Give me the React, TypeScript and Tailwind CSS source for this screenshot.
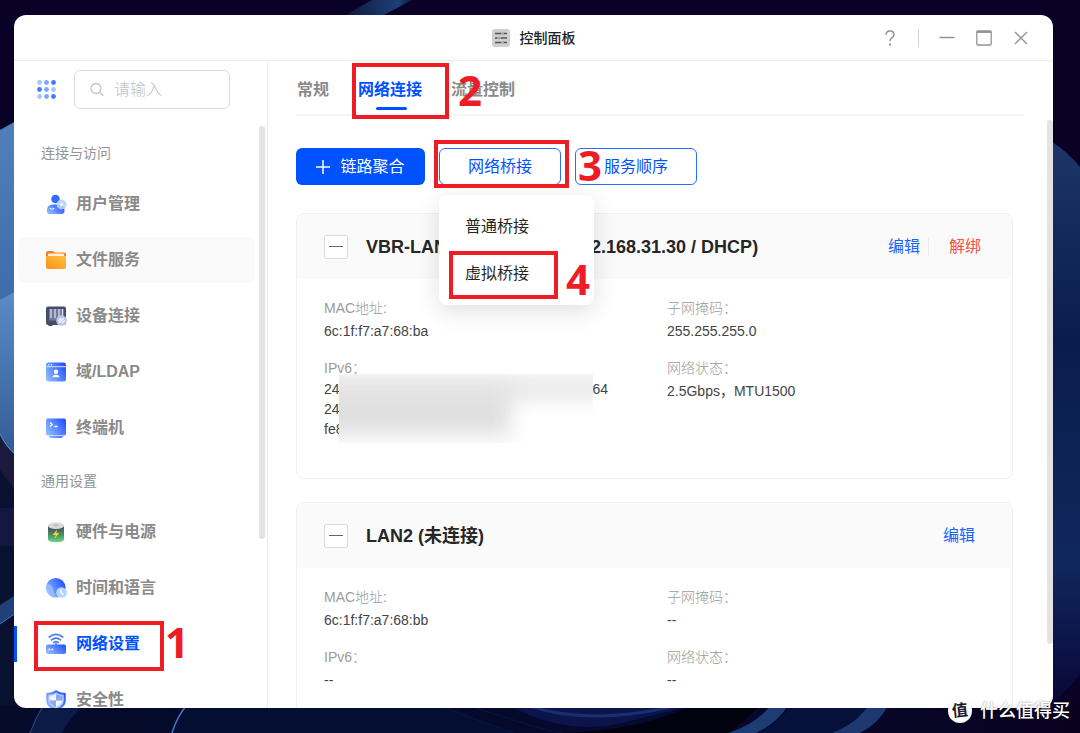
import { Fragment } from 'react';
import type { ReactNode } from 'react';

type MarkerProps = { step: number; box: string; digit: string };

// Red frame with its step number, placed over the control it belongs to
function Marker({ step, box, digit }: MarkerProps) {
  return (
    <>
      <span className={`absolute z-20 border-4 border-[#ee1c24] pointer-events-none ${box}`} />
      <span
        className={`absolute z-20 font-['Open_Sans',sans-serif] text-[42px] leading-none font-bold text-[#ee1c24] pointer-events-none ${digit}`}
      >
        {step}
      </span>
    </>
  );
}

function Wallpaper() {
  return (
    <svg
      className="absolute inset-0 w-full h-full"
      viewBox="0 0 1080 733"
      preserveAspectRatio="none"
      aria-hidden="true"
    >
      <defs>
        <linearGradient id="leftPetal" x1="0" y1="0" x2="0" y2="1">
          <stop offset="0" stopColor="#5080ba" />
          <stop offset="0.5" stopColor="#3f6cab" />
          <stop offset="1" stopColor="#3d69a6" />
        </linearGradient>
        <linearGradient id="leftPetal2" x1="0" y1="0" x2="0" y2="1">
          <stop offset="0" stopColor="#5a8cc6" />
          <stop offset="1" stopColor="#345b98" />
        </linearGradient>
        <linearGradient id="rightPetal" x1="0" y1="0" x2="0" y2="1">
          <stop offset="0" stopColor="#1d3569" />
          <stop offset="0.35" stopColor="#0a1c4b" />
          <stop offset="0.75" stopColor="#10275e" />
          <stop offset="1" stopColor="#0a0636" />
        </linearGradient>
        <linearGradient id="floor" x1="0" y1="0" x2="1" y2="0">
          <stop offset="0" stopColor="#060b2b" />
          <stop offset="0.3" stopColor="#030928" />
          <stop offset="0.6" stopColor="#07092f" />
          <stop offset="1" stopColor="#09021f" />
        </linearGradient>
        <linearGradient id="topArc" x1="0" y1="0" x2="1" y2="0">
          <stop offset="0" stopColor="#0e1740" />
          <stop offset="0.8" stopColor="#1d4076" />
          <stop offset="1" stopColor="#0e1a44" />
        </linearGradient>
      </defs>
      <rect width="1080" height="733" fill="#0a0226" />
      <path d="M372 0h40l-30 16h-38z" fill="url(#topArc)" />
      <path d="M0 130L16 121V470H0z" fill="url(#leftPetal)" />
      <path d="M0 300L16 291V453Q6 447 0 434z" fill="url(#leftPetal2)" />
      <path d="M0 434Q6 447 16 455V510H0z" fill="#1b1a3c" />
      <path d="M0 434Q6 447 16 455" fill="none" stroke="#5c8fc8" />
      <path d="M0 470l16 22v241H0z" fill="#08112f" />
      <path d="M0 508h16v38H0z" fill="#141741" />
      <path d="M0 605l16-10v18l-16 11z" fill="#213f78" />
      <path d="M0 624l16-11" stroke="#3f75bd" />
      <path d="M1052 142q16 10 28 25v508l-28 30z" fill="url(#rightPetal)" />
      <path d="M0 706H1080V733H0z" fill="url(#floor)" />
      <path d="M30 733q6-16 13-27h40q-12 10-21 27z" fill="#0c1a47" />
      <path d="M30 733q6-16 13-27" fill="none" stroke="#24508f" />
      <path d="M174 733q5-16 14-27h260l64 27z" fill="#040d32" />
      <path d="M172 733q5-16 14-27" fill="none" stroke="#3a7cc9" strokeWidth="1.5" />
      <path d="M438 706l76 27M470 706l62 20 30 7" fill="none" stroke="#0b1644" />
      <path d="M510 706q60 32 120 15l60-15z" fill="#0b154b" />
      <path d="M530 706q60 20 145 0" fill="none" stroke="#182f70" strokeWidth="3" />
      <path d="M560 733q80-2 130-27h70l-30 27z" fill="#02020f" />
      <path d="M728 733q28-9 42-27h18q-12 18-32 27z" fill="#1c3c74" />
      <path d="M758 733q20-9 32-27h80l-20 27z" fill="#06113b" />
      <path d="M832 733q24-9 36-27h20q-10 18-28 27z" fill="#1c3970" />
    </svg>
  );
}

const icons: Record<string, ReactNode> = {
  user: (
    <>
      <circle cx="9.500" cy="5" r="4.300" fill="url(#blue)" />
      <path d="M1 15.500Q1 11 7 10.500q4-.300 9 1 2.500 1 2.500 5 0 3.500-3 3.500H3.500Q1 20 1 17.500z" fill="url(#blueH)" />
      <path d="M4 14.500q1.500 1.500 4 .200" stroke="#fff" strokeWidth="1" fill="none" strokeLinecap="round" />
      <circle cx="15.500" cy="10.500" r="5" fill="#b7d1ff" fillOpacity=".9" />
      <circle cx="15.500" cy="10.500" r="1.800" fill="#eef4ff" />
    </>
  ),
  folder: (
    <>
      <path d="M0 3Q0 1 2 1h5l2 1.500h9q2 0 2 2V10H0z" fill="#f58220" />
      <rect x="2" y="3.500" width="16" height="5" rx="1" fill="#fff0dc" />
      <path d="M0 6h20v11q0 2-2 2H2q-2 0-2-2z" fill="url(#orange)" />
    </>
  ),
  device: (
    <>
      <rect x="0" y="0.500" width="20" height="18.500" rx="2" fill="#454d6c" />
      <rect x="2.500" y="18" width="4" height="2" fill="#454d6c" />
      <rect x="3" y="3" width="14.500" height="11.500" fill="#737b9b" />
      <path d="M5 3v9M9 3v9M13 3v9M16.500 3v9" stroke="#d9def0" strokeWidth="1.300" />
      <circle cx="15.500" cy="14.500" r="5.300" fill="#bcc5e4" />
      <path d="M13.500 16.500l4-4M12.800 14.800l2-2.300M16.200 17l2-2.300" stroke="#f1f4fc" strokeWidth="1.300" strokeLinecap="round" />
    </>
  ),
  domain: (
    <>
      <rect x="0" y="0.500" width="20" height="19" rx="2.500" fill="url(#blueH)" />
      <path d="M0 4.700h20" stroke="#d6e4ff" strokeWidth="1" />
      <circle cx="2.800" cy="2.800" r=".7" fill="#fff" />
      <circle cx="5.400" cy="2.800" r=".7" fill="#fff" />
      <circle cx="10" cy="9.800" r="2.200" fill="#fff" />
      <path d="M6.500 15.200q0-2.500 3.500-2.500t3.500 2.500z" fill="#fff" />
    </>
  ),
  terminal: (
    <>
      <rect x="0" y="0.500" width="20" height="17" rx="2" fill="url(#blueH)" />
      <path d="M2.500 18.300h15l-2 1.700h-11z" fill="url(#blueH)" />
      <path d="M4 4.500l2.300 2L4 8.500M8.500 8.500h3.200" fill="none" stroke="#fff" strokeWidth="1.300" />
    </>
  ),
  battery: (
    <>
      <path d="M2 4v13q0 3.200 8 3.200t8-3.200V4z" fill="url(#green)" />
      <ellipse cx="10" cy="3.700" rx="8" ry="3.400" fill="#dadcd9" />
      <ellipse cx="10" cy="3.200" rx="3" ry="1" fill="#b9bbb8" />
      <path d="M11 7.500l-4.200 5.500h2.800L8.800 16.500l4.400-5.500h-2.800z" fill="#ffd21f" />
    </>
  ),
  clock: (
    <>
      <circle cx="9.800" cy="9.800" r="9.800" fill="url(#blueH)" />
      <path d="M1 6q5 0 6 5t4 8Q1 19 0 10z" fill="#a9c8ff" fillOpacity=".6" />
      <circle cx="15.500" cy="14.500" r="5.300" fill="#b5d3ff" />
      <path d="M15 11.500v3.200l2 1.800" fill="none" stroke="#fff" strokeWidth="1.300" strokeLinecap="round" />
    </>
  ),
  router: (
    <>
      <path d="M3.300 3q6.700-5.200 13.400 0M5.500 5.900q4.500-3.500 9 0M7.700 8.600q2.300-1.800 4.600 0" fill="none" stroke="#4f7cf5" strokeWidth="1.700" strokeLinecap="round" />
      <path d="M10 9v3" stroke="#5b86f5" strokeWidth="1.800" />
      <rect x="0" y="10.500" width="20" height="9.500" rx="2" fill="url(#blueH)" />
      <circle cx="3.400" cy="15.500" r=".9" fill="#fff" />
      <circle cx="6.400" cy="15.500" r=".9" fill="#fff" />
    </>
  ),
  shield: (
    <>
      <path d="M10 0q4 3 9.700 3v8q0 6-9.700 9.700Q.3 17 .3 11V3Q6 3 10 0z" fill="url(#blueH)" />
      <path d="M10 2.400Q13 4.500 17.700 4.700V11q0 4.500-7.700 7.600Q2.300 15.500 2.300 11V4.700Q7 4.500 10 2.400z" fill="#b4ccff" />
      <path d="M10 4Q7.500 5.600 3.700 6v4.500H10zM10 10.500v6.500q6.200-2.700 6.300-6.500z" fill="#f0f5ff" />
      <path d="M10 4q2.500 1.600 6.300 2v4.500H10zM10 10.500v6.500q-6.200-2.700-6.300-6.500z" fill="#8aa9f7" />
    </>
  ),
};

function NavIcon({ name }: { name: string }) {
  return (
    <svg className="w-5 h-5 shrink-0 overflow-visible" viewBox="0 0 20 20" aria-hidden="true">
      {icons[name]}
    </svg>
  );
}

function Gradients() {
  return (
    <svg className="absolute w-0 h-0" aria-hidden="true">
      <defs>
        <linearGradient id="blue" x1="1" y1="0" x2="0" y2="1">
          <stop offset="0" stopColor="#3b6cf6" />
          <stop offset="1" stopColor="#2f6bff" />
        </linearGradient>
        <linearGradient id="blueH" x1="0" y1="0.800" x2="1" y2="0.200">
          <stop offset="0" stopColor="#8fbdff" />
          <stop offset="1" stopColor="#2350ff" />
        </linearGradient>
        <linearGradient id="orange" x1="0" y1="1" x2="1" y2="0">
          <stop offset="0" stopColor="#fb9220" />
          <stop offset="1" stopColor="#ffbe3e" />
        </linearGradient>
        <linearGradient id="green" x1="0" y1="0" x2="0" y2="1">
          <stop offset="0.200" stopColor="#4b5a66" />
          <stop offset="0.600" stopColor="#4a9a63" />
          <stop offset="1" stopColor="#6fd884" />
        </linearGradient>
      </defs>
    </svg>
  );
}

const navGroups = [
  {
    title: '连接与访问',
    items: [
      { label: '用户管理', icon: 'user' },
      { label: '文件服务', icon: 'folder', hovered: true },
      { label: '设备连接', icon: 'device' },
      { label: '域/LDAP', icon: 'domain' },
      { label: '终端机', icon: 'terminal' },
    ],
  },
  {
    title: '通用设置',
    items: [
      { label: '硬件与电源', icon: 'battery' },
      { label: '时间和语言', icon: 'clock' },
      { label: '网络设置', icon: 'router', active: true },
      { label: '安全性', icon: 'shield' },
    ],
  },
] as { title: string; items: { label: string; icon: string; hovered?: boolean; active?: boolean }[] }[];

const appDots = [
  '#a9c5ff', '#7ea8ff', '#3d7bff',
  '#3d7bff', '#7ea8ff', '#a9c5ff',
  '#a9c5ff', '#7ea8ff', '#3d7bff',
];

function TitleBar() {
  return (
    <header className="relative flex shrink-0 items-center justify-center h-[46px] border-b border-[#ececec]">
      <div className="flex items-center gap-2.5">
        <svg className="w-[18px] h-[18px]" viewBox="0 0 18 18" aria-hidden="true">
          <rect width="18" height="18" rx="3" fill="#cfcfcf" />
          <path d="M3 4.500h6.500M12 4.500h3M3 9h2.500M8.500 9H15M3 13.500h6.500M12 13.500h3" stroke="#555" strokeWidth="1.500" />
          <path d="M11 3.200v2.600M7 7.700v2.600M11 12.200v2.600" stroke="#8a8a8a" strokeWidth="1.200" />
        </svg>
        <h1 className="text-sm font-medium text-[#222]">控制面板</h1>
      </div>
      <div className="absolute right-6 flex items-center text-[#949494]">
        <button type="button" aria-label="帮助">
          <svg className="w-4 h-4" viewBox="0 0 16 16" fill="none" stroke="currentColor" strokeWidth="1.500">
            <path d="M4 4.800Q4 1 8 1t4 3.500Q12 6.500 10 7.700 8 9 8 11.200" />
            <path d="M8 13.500v2" strokeWidth="2" />
          </svg>
        </button>
        <span className="w-px h-[18px] mx-5 bg-[#d2d2d2]" />
        <button type="button" aria-label="最小化" className="mr-[21px]">
          <svg className="w-4 h-4" viewBox="0 0 16 16" stroke="currentColor" strokeWidth="1.400">
            <path d="M0.500 7.500h15" />
          </svg>
        </button>
        <button type="button" aria-label="最大化" className="mr-[21px]">
          <svg className="w-4 h-4" viewBox="0 0 16 16" fill="none" stroke="currentColor" strokeWidth="1.300">
            <rect x="0.800" y="1" width="14.400" height="14" rx="1" />
            <path d="M1 2h14" strokeWidth="2.200" />
          </svg>
        </button>
        <button type="button" aria-label="关闭">
          <svg className="w-4 h-4" viewBox="0 0 16 16" stroke="currentColor" strokeWidth="1.400">
            <path d="M2 2l12 12M14 2L2 14" />
          </svg>
        </button>
      </div>
    </header>
  );
}

function Sidebar() {
  return (
    <aside className="flex flex-col shrink-0 w-[254px] border-r border-[#ececec] pt-[9px]">
      <div className="flex items-center gap-[18px] pl-[23px]">
        <svg className="w-[19px] h-[19px]" viewBox="0 0 19 19" aria-hidden="true">
          {appDots.map((fill, i) => (
            <circle key={i} cx={2.5 + (i % 3) * 7} cy={2.5 + Math.floor(i / 3) * 7} r="2.400" fill={fill} />
          ))}
        </svg>
        <label className="flex items-center gap-2.5 w-[156px] h-[39px] px-[15px] border border-[#dcdcdc] rounded-md">
          <svg className="w-3.5 h-3.5 shrink-0" viewBox="0 0 14 14" fill="none" stroke="#c4c4c4" strokeWidth="1.300">
            <circle cx="6" cy="5.500" r="5" />
            <path d="M9.500 9.200l3.800 3.600" />
          </svg>
          <input
            type="text"
            aria-label="搜索"
            placeholder="请输入"
            className="w-full min-w-0 text-base outline-none placeholder:text-[#bfbfbf] placeholder:font-light"
          />
        </label>
      </div>

      <div className="flex flex-1 min-h-0 mt-[17px]">
        <nav className="flex flex-col flex-1 gap-[3px] px-1 overflow-hidden">
          {navGroups.map((group) => (
            <Fragment key={group.title}>
              <h2 className="shrink-0 pt-[17px] pb-[15px] pl-[23px] text-sm leading-5 text-[#949494]">{group.title}</h2>
              <ul className="flex flex-col gap-2.5 shrink-0">
                {group.items.map((item) => (
                  <li key={item.label} className="relative">
                    {item.active && <span className="absolute -left-1 top-[5px] w-[3px] h-9 bg-[#0052ff]" />}
                    <a
                      href="#"
                      className={`flex items-center gap-2.5 h-[46px] pl-7 rounded-md text-base font-bold ${
                        item.active ? 'text-[#0052ff]' : 'text-[#8a8a8a]'
                      } ${item.hovered ? 'bg-[#fafafa]' : ''}`}
                    >
                      <NavIcon name={item.icon} />
                      {item.label}
                    </a>
                    {item.active && (
                      <Marker step={1} box="left-4 top-0 w-[130px] h-[50px]" digit="left-[147px] top-0" />
                    )}
                  </li>
                ))}
              </ul>
            </Fragment>
          ))}
        </nav>
        <span className="w-1.5 h-[71%] mr-0.5 rounded-full bg-[#e3e3e3]" />
      </div>
    </aside>
  );
}

function Field({ label, children }: { label: string; children: ReactNode }) {
  return (
    <div>
      <dt className="leading-[22px] text-[#9b9b9b] font-light">{label}</dt>
      <dd className="leading-6 text-[#444]">{children}</dd>
    </div>
  );
}

function Card({ title, actions, children }: { title: ReactNode; actions: ReactNode; children: ReactNode }) {
  return (
    <section className="shrink-0 border border-[#f0f0f0] rounded-lg overflow-hidden">
      <div className="flex items-center h-[65px] pl-[27px] pr-[31px] bg-[#fafafa]">
        <button
          type="button"
          aria-label="收起"
          className="flex items-center justify-center w-6 h-6 border border-[#dadada] rounded-xs bg-white"
        >
          <span className="w-3.5 h-px bg-[#666]" />
        </button>
        <h3 className="ml-[18px] text-lg font-bold text-[#262626] whitespace-nowrap">{title}</h3>
        <div className="flex items-center ml-auto text-base">{actions}</div>
      </div>
      <dl className="grid grid-cols-[343px_1fr] gap-y-3.5 min-h-[199px] pt-[18px] pl-[27px] content-start text-sm">
        {children}
      </dl>
    </section>
  );
}

// Smudge that hides the middle of the IPv6 addresses
function Redacted() {
  return (
    <div className="absolute left-[15px] -top-[5px] w-[254px] h-[69px] overflow-hidden bg-white">
      <div className="absolute -left-4 top-0 w-[310px] h-7 bg-[#ececec] blur-[8px]" />
      <div className="absolute -left-5 top-3 w-[192px] h-[50px] bg-[#e0e0e0] blur-[10px]" />
    </div>
  );
}

function Content() {
  return (
    <main className="flex flex-1 min-w-0 overflow-hidden">
      <div className="flex flex-col flex-1 min-w-0 pl-7 pr-[23px]">
        <div role="tablist" className="flex shrink-0 gap-[29px] h-[55px] px-px border-b-2 border-[#f5f5f5] text-base font-bold text-[#8a8a8a]">
          <button type="button" role="tab" className="pt-1">
            常规
          </button>
          <div className="relative flex">
            <button type="button" role="tab" aria-selected="true" className="pt-1 text-[#0052ff]">
              网络连接
            </button>
            <span className="absolute left-[18px] bottom-1 w-[31px] h-[3px] rounded-full bg-[#0052ff]" />
            <Marker step={2} box="-left-1.5 top-0.5 w-[97px] h-14" digit="left-[100px] top-2" />
          </div>
          <button type="button" role="tab" className="pt-1">
            流量控制
          </button>
        </div>

        <div className="flex shrink-0 gap-3.5 mt-8 text-base">
          <button
            type="button"
            className="flex items-center justify-center gap-2.5 w-[129px] h-[37px] rounded-md bg-[#0052ff] text-white"
          >
            <svg className="w-3.5 h-3.5" viewBox="0 0 14 14" stroke="currentColor" strokeWidth="1.500">
              <path d="M7 0v14M0 7h14" />
            </svg>
            链路聚合
          </button>
          <div className="relative z-10">
            <button type="button" className="w-[122px] h-[37px] border border-[#2b6cff] rounded-md text-[#0052ff]">
              网络桥接
            </button>
            <Marker step={3} box="-left-[5px] -top-2 w-[135px] h-12" digit="left-[139px] -top-1" />
            <ul
              role="menu"
              className="absolute left-0 top-[47px] w-[155px] py-2 rounded-lg bg-white shadow-[0_6px_24px_rgba(0,0,0,0.13)]"
            >
              <li role="none">
                <button type="button" role="menuitem" className="block w-full h-[47px] pl-[26px] text-left text-[#262626]">
                  普通桥接
                </button>
              </li>
              <li role="none" className="relative">
                <button type="button" role="menuitem" className="block w-full h-[47px] pl-[26px] text-left text-[#262626]">
                  虚拟桥接
                </button>
                <Marker step={4} box="left-2.5 top-px w-[109px] h-12" digit="left-[127px] top-2" />
              </li>
            </ul>
          </div>
          <button type="button" className="w-[122px] h-[37px] border border-[#2b6cff] rounded-md text-[#0052ff]">
            服务顺序
          </button>
        </div>

        <div className="flex flex-col gap-[23px] mt-7 mr-[11px]">
          <Card
            title={
              <span className="flex gap-[108px]">
                <span>VBR-LAN1</span>
                <span>(192.168.31.30 / DHCP)</span>
              </span>
            }
            actions={
              <>
                <a href="#" className="text-[#1b63ff]">编辑</a>
                <span className="w-px h-[18px] ml-2 mr-5 bg-[#ececec]" />
                <a href="#" className="text-[#f5533d]">解绑</a>
              </>
            }
          >
            <Field label="MAC地址:">6c:1f:f7:a7:68:ba</Field>
            <Field label="子网掩码：">255.255.255.0</Field>
            <Field label="IPv6：">
              <div className="relative leading-5">
                <p className="flex gap-[253px]">
                  <span>24</span>
                  <span>64</span>
                </p>
                <p>24</p>
                <p>fe8</p>
                <Redacted />
              </div>
            </Field>
            <Field label="网络状态：">2.5Gbps，MTU1500</Field>
          </Card>

          <Card title="LAN2 (未连接)" actions={<a href="#" className="mr-1.5 text-[#1b63ff]">编辑</a>}>
            <Field label="MAC地址:">6c:1f:f7:a7:68:bb</Field>
            <Field label="子网掩码：">--</Field>
            <Field label="IPv6：">--</Field>
            <Field label="网络状态：">--</Field>
          </Card>
        </div>
      </div>
      <span className="w-1.5 h-[81%] mt-[59px] shrink-0 rounded-full bg-[#e3e3e3]" />
    </main>
  );
}

function Watermark() {
  return (
    <div className="absolute right-2.5 bottom-2 flex items-center gap-2 text-white">
      <span className="flex items-center justify-center w-6 h-6 rounded-full bg-white text-base leading-none font-bold text-[#1a1a2c]">
        <span className="-rotate-6">值</span>
      </span>
      <span className="text-lg leading-7 font-medium [text-shadow:0_0_2px_rgba(0,0,0,0.5)]">什么值得买</span>
    </div>
  );
}

export default function App() {
  return (
    <div className="relative h-screen pt-[15px] pr-[27px] pb-[25px] pl-3.5 overflow-hidden bg-[#0a0226] font-['Liberation_Sans','Noto_Sans_CJK_SC',sans-serif]">
      <Wallpaper />
      <Gradients />
      <div className="relative flex flex-col h-full overflow-hidden rounded-xl bg-white">
        <TitleBar />
        <div className="flex flex-1 min-h-0">
          <Sidebar />
          <Content />
        </div>
      </div>
      <Watermark />
    </div>
  );
}
